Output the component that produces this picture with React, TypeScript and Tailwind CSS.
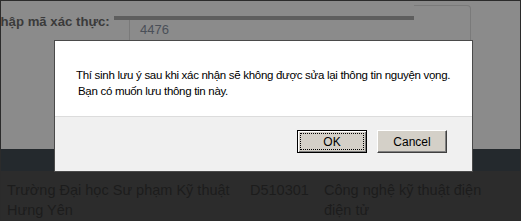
import React from 'react';

const font = { fontFamily: '"Liberation Sans", Arial, sans-serif' };

const DialogButton: React.FC<{ label: string; focused?: boolean }> = ({ label, focused }) => (
  <button
    className={`w-[70px] h-[23px] bg-[#d4d0c8] text-[12px] text-black leading-none p-0 ${
      focused
        ? 'border border-black shadow-[inset_1px_1px_0_#fff,inset_-1px_-1px_0_#808080]'
        : 'border border-t-white border-l-white border-r-[#404040] border-b-[#404040] shadow-[inset_-1px_-1px_0_#808080]'
    }`}
  >
    {focused ? (
      <span className="flex items-center justify-center h-[17px] m-[2px] border border-dotted border-black">
        {label}
      </span>
    ) : (
      label
    )}
  </button>
);

export default function App() {
  return (
    <div
      className="relative w-[521px] h-[221px] overflow-hidden border border-[#2b2b2b] bg-[#8b8b8b]"
      style={font}
    >
      {/* page behind the overlay */}
      <div className="flex flex-col h-full">
        <div className="flex items-start h-[148px]">
          <div className="w-[113px] shrink-0 mt-[11px] text-[13.2px] font-bold text-[#3b3b3b] whitespace-nowrap overflow-hidden">
            <span className="block -ml-[10px]">Nhập mã xác thực:</span>
          </div>
          <div className="w-[300px] shrink-0 flex flex-col">
            <div className="mt-[15px] h-[4px] bg-[#5e5e5e]" />
            <div className="ml-[15px] h-[130px] border-l border-[#7a7a7a] pl-[10px] pt-[1px] text-[13px] text-[#4a4f58] leading-[17px]">
              4476
            </div>
          </div>
          <div className="w-[57px] shrink-0 mt-[4px] h-[144px] border-t border-r border-[#7a7a7a] rounded-tr-[4px]" />
        </div>
        <div className="h-[22px] bg-[#24292d]" />
        <div className="flex-1 bg-[#2c2c2c] flex pt-[9px] text-[14.5px] leading-[20px] text-[#1c1c1c]">
          <div className="w-[249px] shrink-0 pl-[6px] pr-[20px]">Trường Đại học Sư phạm Kỹ thuật Hưng Yên</div>
          <div className="w-[74px] shrink-0">D510301</div>
          <div className="w-[168px] shrink-0">Công nghệ kỹ thuật điện điện tử</div>
        </div>
      </div>

      {/* modal dialog */}
      <div className="absolute left-[53px] top-[39px] w-[419px] h-[132px] flex flex-col border border-[#4a4a4a] bg-white">
        <div className="flex-1 pl-[21px] pt-[26px] text-[11.5px] leading-[16px] tracking-[-0.3px] text-black whitespace-nowrap">
          <p>Thí sinh lưu ý sau khi xác nhận sẽ không được sửa lại thông tin nguyện vọng.</p>
          <p className="ml-[2px]">Bạn có muốn lưu thông tin này.</p>
        </div>
        <div className="h-[55px] bg-[#f0f0f0] border-t border-[#dcdcdc] flex justify-end items-start gap-[10px] pt-[13px] pr-[25px]">
          <DialogButton label="OK" focused />
          <DialogButton label="Cancel" />
        </div>
      </div>
    </div>
  );
}
